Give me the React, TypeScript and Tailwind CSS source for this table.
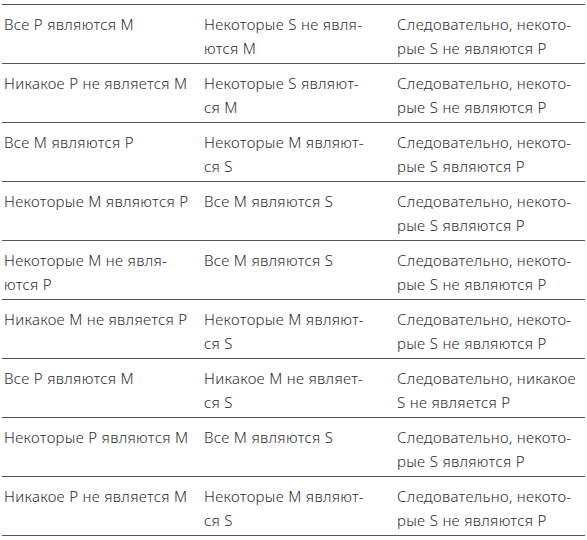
import React from "react";

const rows: string[][][] = [
  [["Все Р являются М"], ["Некоторые S не явля-", "ются М"], ["Следовательно, некото-", "рые S не являются Р"]],
  [["Никакое Р не является М"], ["Некоторые S являют-", "ся М"], ["Следовательно, некото-", "рые S не являются Р"]],
  [["Все М являются Р"], ["Некоторые М являют-", "ся S"], ["Следовательно, некото-", "рые S являются Р"]],
  [["Некоторые М являются Р"], ["Все М являются S"], ["Следовательно, некото-", "рые S являются Р"]],
  [["Некоторые М не явля-", "ются Р"], ["Все М являются S"], ["Следовательно, некото-", "рые S не являются Р"]],
  [["Никакое М не является Р"], ["Некоторые М являют-", "ся S"], ["Следовательно, некото-", "рые S не являются Р"]],
  [["Все Р являются М"], ["Никакое М не являет-", "ся S"], ["Следовательно, никакое", "S не является Р"]],
  [["Некоторые Р являются М"], ["Все М являются S"], ["Следовательно, некото-", "рые S являются Р"]],
  [["Никакое Р не является М"], ["Некоторые М являют-", "ся S"], ["Следовательно, некото-", "рые S не являются Р"]],
];

const widths = ["w-[200px]", "w-[193px]", "w-[190px]"];

export default function App() {
  return (
    <div className="w-[587px] h-[540px] bg-white pt-[4px] px-[2px]" style={{ fontFamily: '"Noto Sans", sans-serif' }}>
      <div className="border-t border-[#555]">
        {rows.map((row, i) => (
          <div key={i} className="flex border-b border-[#555] h-[59px]">
            {row.map((cell, j) => (
              <div key={j} className={`${widths[j]} pl-[2px] pt-[7px] text-[15px] leading-[24px] tracking-[0.3px] font-light text-[#2e2e2e] whitespace-nowrap`}>
                {cell.map((line, k) => (
                  <div key={k}>{line}</div>
                ))}
              </div>
            ))}
          </div>
        ))}
      </div>
    </div>
  );
}
